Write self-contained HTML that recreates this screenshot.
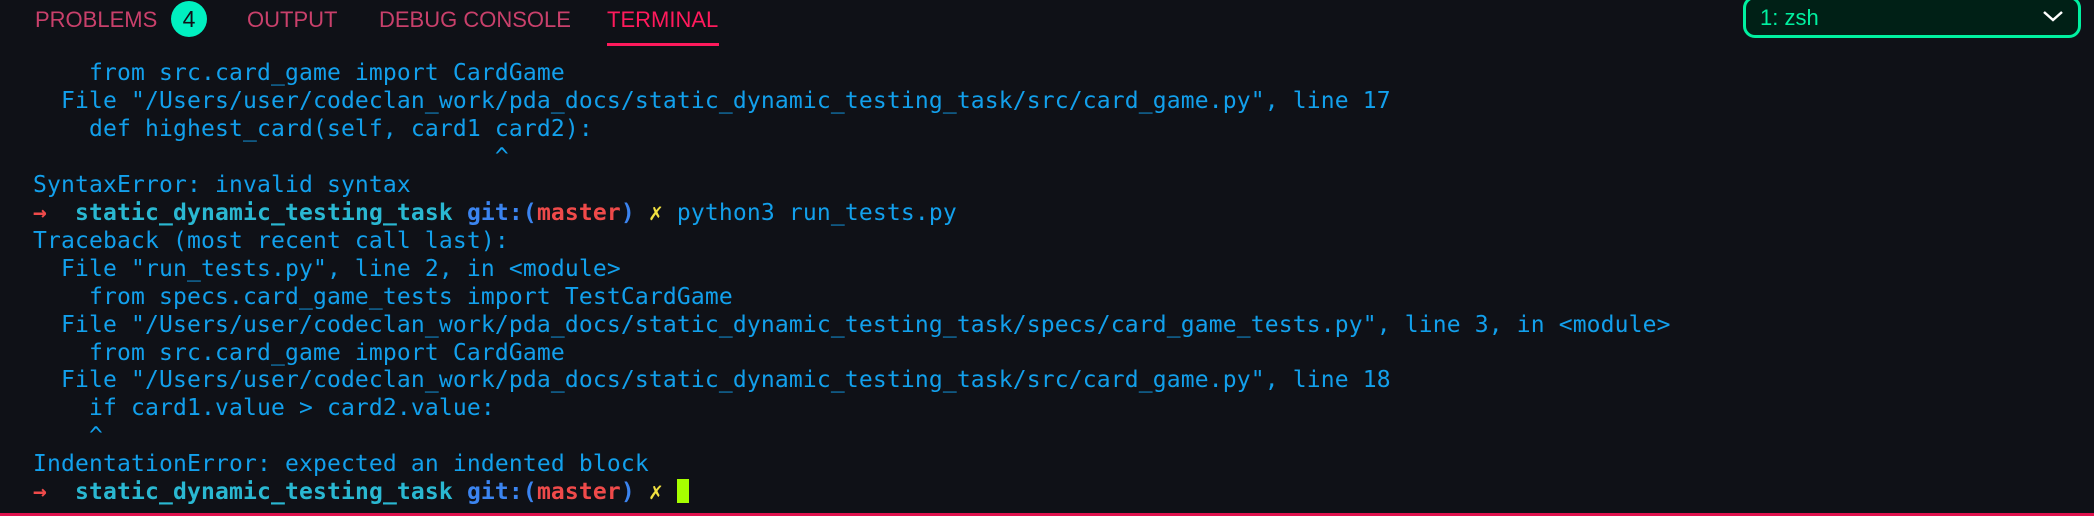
<!DOCTYPE html>
<html><head><meta charset="utf-8"><style>
html,body{margin:0;padding:0;background:#0f1117;width:2094px;height:516px;overflow:hidden;position:relative}
.tab{position:absolute;top:6px;font-family:"Liberation Sans",sans-serif;font-size:22px;color:#c9406b;line-height:27px}
.badge{position:absolute;left:170px;top:1px;width:36px;height:36px;border-radius:50%;background:#00f0c0;color:#0f1117;font-family:"Liberation Sans",sans-serif;font-size:23px;line-height:36px;text-align:center}
.ul{position:absolute;left:607px;top:43px;width:112px;height:3px;background:#ff1a5c}
.dd{position:absolute;left:1743px;top:-4px;width:332px;height:36px;border:3px solid #00f0a0;border-radius:12px;background:#002016}
.dd span{position:absolute;left:14px;top:6px;font-family:"Liberation Sans",sans-serif;font-size:22px;color:#00f0a0}
pre{position:absolute;left:33px;top:60px;margin:0;font-family:"DejaVu Sans Mono",monospace;font-size:23px;letter-spacing:0.15px;line-height:27.95px;color:#12a0ec}
.r{color:#ef4a4a;font-weight:bold}.c{color:#2ab8d2;font-weight:bold}.b{color:#3b84f0;font-weight:bold}.y{color:#f0e040}
.cur{display:inline-block;width:12px;height:24px;background:#a6ff00;vertical-align:-4px}
.bot{position:absolute;left:0;top:513px;width:2094px;height:3px;background:#e0124e}
</style></head><body>
<div class="tab" style="left:35px">PROBLEMS</div>
<div class="badge" style="left:171px">4</div>
<div class="tab" style="left:247px">OUTPUT</div>
<div class="tab" style="left:379px">DEBUG CONSOLE</div>
<div class="tab" style="left:607px;color:#ff1a5c">TERMINAL</div>
<div class="ul"></div>
<div class="dd"><span>1: zsh</span><svg style="position:absolute;left:296px;top:10px" width="22" height="14" viewBox="0 0 22 14"><path d="M2 3 L11 11 L20 3" stroke="#fff" stroke-width="2.5" fill="none"/></svg></div>
<pre>    from src.card_game import CardGame
  File "/Users/user/codeclan_work/pda_docs/static_dynamic_testing_task/src/card_game.py", line 17
    def highest_card(self, card1 card2):
                                 ^
SyntaxError: invalid syntax
<span class="r">→</span>  <span class="c">static_dynamic_testing_task</span> <span class="b">git:(</span><span class="r">master</span><span class="b">)</span> <span class="y">✗</span> python3 run_tests.py
Traceback (most recent call last):
  File "run_tests.py", line 2, in &lt;module&gt;
    from specs.card_game_tests import TestCardGame
  File "/Users/user/codeclan_work/pda_docs/static_dynamic_testing_task/specs/card_game_tests.py", line 3, in &lt;module&gt;
    from src.card_game import CardGame
  File "/Users/user/codeclan_work/pda_docs/static_dynamic_testing_task/src/card_game.py", line 18
    if card1.value &gt; card2.value:
    ^
IndentationError: expected an indented block
<span class="r">→</span>  <span class="c">static_dynamic_testing_task</span> <span class="b">git:(</span><span class="r">master</span><span class="b">)</span> <span class="y">✗</span> <span class="cur"></span></pre>
<div class="bot"></div>
</body></html>
